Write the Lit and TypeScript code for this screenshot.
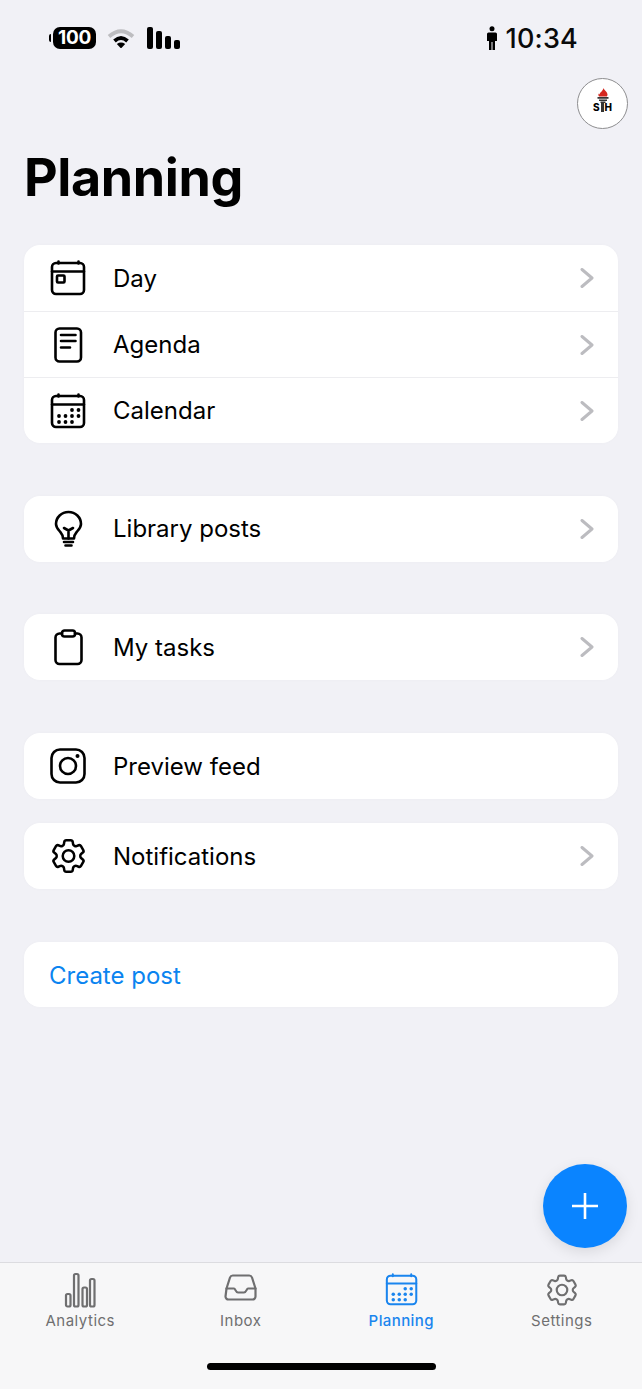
import { LitElement, css, html, svg } from "lit";
import { customElement } from "lit/decorators.js";
import { classMap } from "lit/directives/class-map.js";

const GEAR =
  "M9.594 3.94c.09-.542.56-.94 1.11-.94h2.593c.55 0 1.02.398 1.11.94l.213 1.281c.063.374.313.686.645.87.074.04.147.083.22.127.325.196.72.257 1.075.124l1.217-.456a1.125 1.125 0 0 1 1.37.49l1.296 2.247a1.125 1.125 0 0 1-.26 1.431l-1.003.827c-.293.241-.438.613-.43.992a7.723 7.723 0 0 1 0 .255c-.008.378.137.75.43.991l1.004.827c.424.35.534.955.26 1.43l-1.298 2.247a1.125 1.125 0 0 1-1.369.491l-1.217-.456c-.355-.133-.75-.072-1.076.124a6.47 6.47 0 0 1-.22.128c-.331.183-.581.495-.644.869l-.213 1.281c-.09.543-.56.94-1.11.94h-2.594c-.55 0-1.019-.398-1.11-.94l-.213-1.281c-.062-.374-.312-.686-.644-.87a6.52 6.52 0 0 1-.22-.127c-.325-.196-.72-.257-1.076-.124l-1.217.456a1.125 1.125 0 0 1-1.369-.49l-1.297-2.247a1.125 1.125 0 0 1 .26-1.431l1.004-.827c.292-.24.437-.613.43-.991a6.932 6.932 0 0 1 0-.255c.007-.38-.138-.751-.43-.992l-1.004-.827a1.125 1.125 0 0 1-.26-1.43l1.297-2.247a1.125 1.125 0 0 1 1.37-.491l1.216.456c.356.133.751.072 1.076-.124.072-.044.146-.086.22-.128.332-.183.582-.495.644-.869l.214-1.28Z";

function calendarFrame() {
  return svg`
    <rect x="2" y="3" width="32" height="31" rx="4"></rect>
    <path d="M2 11.5h32M8.5 1.5v2M28.5 1.5v2"></path>
  `;
}

function calendarDots() {
  const dots = [
    [22, 17], [28.5, 17],
    [9, 23], [15.5, 23], [22, 23], [28.5, 23],
    [9, 29], [15.5, 29], [22, 29],
  ];
  return dots.map(([x, y]) => svg`<circle class="dot" cx=${x} cy=${y} r="1.9"></circle>`);
}

const rowIcons = {
  day: svg`
    ${calendarFrame()}
    <rect x="7" y="15.5" width="7.5" height="7" rx="1"></rect>
  `,
  agenda: svg`
    <rect x="5.5" y="1.5" width="25.5" height="33" rx="4"></rect>
    <path d="M11 8h14.5M11 14h14.5M11 20.5h9"></path>
  `,
  calendar: svg`${calendarFrame()}${calendarDots()}`,
  bulb: svg`
    <path d="M13 27.500c0-4-1.500-5-3.500-7.500C7.500 17.800 6 16 6 13 6 6.200 11.500 1 18.500 1S31 6.200 31 13c0 3-1.500 4.800-3.500 7-2 2.500-3.500 3.500-3.500 7.500z"></path>
    <path d="M14 17l4.500 2.500 4.500-2.500M18.500 19.500v8M14 31h9M15.500 34.500h6"></path>
  `,
  clipboard: svg`
    <path d="M12 4.500H9.500a4 4 0 0 0-4 4V31a4 4 0 0 0 4 4h18a4 4 0 0 0 4-4V8.500a4 4 0 0 0-4-4H25"></path>
    <rect x="12" y="1.500" width="13" height="6" rx="2.500"></rect>
  `,
  instagram: svg`
    <rect x="1.500" y="1.500" width="33" height="33" rx="8.500"></rect>
    <circle cx="18" cy="18" r="8"></circle>
    <circle class="dot" cx="27.500" cy="8" r="2"></circle>
  `,
  gear: svg`
    <g transform="translate(-2.500 -3) scale(1.750)">
      <path stroke-width="1.450" d=${GEAR}></path>
      <circle stroke-width="1.450" cx="12" cy="12" r="3.300"></circle>
    </g>
  `,
};

const tabIcons = {
  analytics: svg`
    <rect x="2" y="21" width="4.500" height="12.500" rx="1.500"></rect>
    <rect x="10" y="1" width="4.500" height="32.500" rx="1.500"></rect>
    <rect x="18.500" y="14.500" width="4.500" height="19" rx="1.500"></rect>
    <rect x="26" y="6" width="4.500" height="27.500" rx="1.500"></rect>
  `,
  inbox: svg`
    <path d="M1.500 15.500 5 4.500a3 3 0 0 1 2.800-2h16.400a3 3 0 0 1 2.800 2l3.500 11v8a3 3 0 0 1-3 3h-24a3 3 0 0 1-3-3z"></path>
    <path d="M1.500 15.500h7.500c1.500 0 1.500 4 4 4h6c2.500 0 2.500-4 4-4h7.500"></path>
  `,
  planning: svg`
    <g transform="scale(0.92)">
      ${calendarFrame()}${calendarDots()}
    </g>
  `,
  settings: svg`
    <g transform="translate(-3.200 -2.200) scale(1.600)">
      <path stroke-width="1.350" d=${GEAR}></path>
      <circle stroke-width="1.350" cx="12" cy="12" r="3.300"></circle>
    </g>
  `,
};

type RowIcon = keyof typeof rowIcons;
type TabIcon = keyof typeof tabIcons;

interface Row {
  icon: RowIcon;
  label: string;
  chevron: boolean;
}

const groups: { near?: boolean; rows: Row[] }[] = [
  {
    rows: [
      { icon: "day", label: "Day", chevron: true },
      { icon: "agenda", label: "Agenda", chevron: true },
      { icon: "calendar", label: "Calendar", chevron: true },
    ],
  },
  { rows: [{ icon: "bulb", label: "Library posts", chevron: true }] },
  { rows: [{ icon: "clipboard", label: "My tasks", chevron: true }] },
  { rows: [{ icon: "instagram", label: "Preview feed", chevron: false }] },
  { near: true, rows: [{ icon: "gear", label: "Notifications", chevron: true }] },
];

const tabs: { icon: TabIcon; label: string; active?: boolean }[] = [
  { icon: "analytics", label: "Analytics" },
  { icon: "inbox", label: "Inbox" },
  { icon: "planning", label: "Planning", active: true },
  { icon: "settings", label: "Settings" },
];

@customElement("app-root")
export class AppRoot extends LitElement {
  private renderRow(row: Row) {
    return html`
      <div class="row">
        <svg class="row-icon" viewBox="0 0 36 36" aria-hidden="true">${rowIcons[row.icon]}</svg>
        <span class="row-label">${row.label}</span>
        ${row.chevron
          ? html`<svg class="chevron" viewBox="0 0 14 20" aria-hidden="true"><path d="M2 1.500 12 10 2 18.500"></path></svg>`
          : ""}
      </div>
    `;
  }

  protected override render() {
    return html`
      <div class="screen">
        <div class="status">
          <div class="status-left">
            <span class="nub"></span>
            <span class="battery">100</span>
            <svg class="wifi" viewBox="0 0 28 20" aria-hidden="true">
              <path class="wifi-far" d="M2 8.500Q14 -2 26 8.500"></path>
              <path d="M7.500 13Q14 7 20.500 13"></path>
              <path class="wifi-dot" d="M14 20.500 9.800 16q4.200-2.800 8.400 0z"></path>
            </svg>
            <span class="signal">
              <i style="height:22px"></i><i style="height:18px"></i><i style="height:13px"></i><i style="height:9px"></i>
            </span>
          </div>
          <div class="status-right">
            <svg class="person" viewBox="0 0 10 24" aria-hidden="true">
              <circle cx="5" cy="2.800" r="2.500"></circle>
              <path d="M1.500 6.500h7A1.500 1.500 0 0 1 10 8v7H8v9H5.500v-8h-1v8H2v-9H0V8a1.500 1.500 0 0 1 1.500-1.500z"></path>
            </svg>
            <span class="time">10:34</span>
          </div>
        </div>

        <div class="avatar-row">
          <div class="avatar">
            <svg class="torch" viewBox="0 0 14 15" aria-hidden="true">
              <path class="flame" d="M7.500 0c.5 2 3.800 3.500 4 6.500.1.800-.2 1.500-.7 2H3.200c-.8-.7-1-1.800-.6-3 .2.500.5.800.9 1C3.800 4.500 7 3 7.500 0z"></path>
              <path class="cup" d="M1.500 9h11v1.800h-11zM3 11.400h8V13H3zM4.500 13.500h5V15h-5z"></path>
            </svg>
            <span class="monogram">S<i></i>H</span>
          </div>
        </div>

        <h1>Planning</h1>

        <main>
          ${groups.map(
            (group) => html`
              <section class=${classMap({ card: true, near: !!group.near })}>
                ${group.rows.map((row) => this.renderRow(row))}
              </section>
            `,
          )}
          <section class="card create">Create post</section>
        </main>

        <div class="fab">
          <svg viewBox="0 0 28 28" aria-hidden="true"><path d="M14 1v26M1 14h26"></path></svg>
        </div>

        <nav>
          <div class="tabs">
            ${tabs.map(
              (tab) => html`
                <div class=${classMap({ tab: true, active: !!tab.active })}>
                  <svg viewBox="0 0 32 34" aria-hidden="true">${tabIcons[tab.icon]}</svg>
                  <span>${tab.label}</span>
                </div>
              `,
            )}
          </div>
          <div class="home"></div>
        </nav>
      </div>
    `;
  }

  public static override styles = css`
    :host {
      display: block;
      font-family: Inter, "Liberation Sans", sans-serif;
      color: #000;
    }

    .screen {
      position: relative;
      display: flex;
      flex-direction: column;
      height: 1389px;
      background: #f1f1f6;
      overflow: hidden;
    }

    .status {
      display: flex;
      justify-content: space-between;
      align-items: center;
      height: 38px;
      padding: 19px 64px 0 49px;
    }

    .status-left,
    .status-right {
      display: flex;
      align-items: center;
    }

    .nub {
      width: 2px;
      height: 8px;
      margin-right: 2px;
      border-radius: 2px 0 0 2px;
      background: #000;
    }

    .battery {
      width: 43px;
      height: 22px;
      border-radius: 7px;
      background: #000;
      color: #fff;
      font-size: 19px;
      font-weight: 700;
      line-height: 22px;
      text-align: center;
      letter-spacing: -0.3px;
    }

    .wifi {
      width: 28px;
      height: 20px;
      margin-left: 11px;
      fill: none;
      stroke: #000;
      stroke-width: 3.800;
    }

    .wifi-far {
      stroke: #bdbdc0;
    }

    .wifi-dot {
      fill: #000;
      stroke: none;
    }

    .signal {
      display: flex;
      align-items: flex-end;
      gap: 3px;
      height: 22px;
      margin-left: 12px;
    }

    .signal i {
      width: 6px;
      border-radius: 2px;
      background: #000;
    }

    .person {
      width: 10px;
      height: 24px;
      fill: #000;
    }

    .time {
      margin-left: 9px;
      padding-top: 1px;
      font-size: 27px;
      font-weight: 500;
      line-height: 34px;
      letter-spacing: 0.2px;
      color: #0a0a0a;
    }

    .avatar-row {
      display: flex;
      justify-content: flex-end;
      margin-top: 21px;
      padding-right: 14px;
    }

    .avatar {
      box-sizing: border-box;
      display: flex;
      flex-direction: column;
      align-items: center;
      width: 51px;
      height: 51px;
      padding-top: 9px;
      border: 1px solid #8e8e90;
      border-radius: 50%;
      background: #fff;
    }

    .torch {
      width: 14px;
      height: 15px;
    }

    .flame {
      fill: #d4271f;
    }

    .cup {
      fill: #333;
    }

    .monogram {
      display: flex;
      align-items: flex-end;
      height: 9px;
      font-size: 10px;
      font-weight: 800;
      line-height: 9px;
    }

    .monogram i {
      width: 3px;
      height: 9px;
      margin: 0 1px;
      background: #333;
    }

    h1 {
      margin: 18px 0 0 24px;
      font-size: 52px;
      font-weight: 700;
      line-height: 62px;
      letter-spacing: -0.4px;
    }

    main {
      display: flex;
      flex: 1;
      flex-direction: column;
      gap: 52.6px;
      padding: 36.3px 24px 0;
    }

    .card {
      border-radius: 16px;
      background: #fff;
      box-shadow: 0 0 4px rgba(0, 0, 0, 0.02);
    }

    .near {
      margin-top: -28.6px;
    }

    .row {
      box-sizing: border-box;
      display: flex;
      align-items: center;
      height: 66px;
      padding: 0 24px 0 26px;
    }

    .row + .row {
      border-top: 1px solid #ededf0;
    }

    .row-icon {
      flex: none;
      width: 36px;
      height: 36px;
      overflow: visible;
      fill: none;
      stroke: #000;
      stroke-width: 2.6;
      stroke-linecap: round;
      stroke-linejoin: round;
    }

    .dot {
      fill: currentColor;
      stroke: none;
    }

    .row-label {
      flex: 1;
      margin-left: 27px;
      padding-top: 1px;
      font-size: 24px;
      line-height: 32px;
    }

    .chevron {
      width: 14px;
      height: 20px;
      fill: none;
      stroke: #bcbcc0;
      stroke-width: 3;
      stroke-linecap: round;
      stroke-linejoin: round;
    }

    .create {
      height: 65px;
      padding-left: 25px;
      color: #0a84f0;
      font-size: 24px;
      line-height: 67px;
    }

    .fab {
      position: absolute;
      top: 1164px;
      left: 543px;
      display: flex;
      align-items: center;
      justify-content: center;
      width: 84px;
      height: 84px;
      border-radius: 50%;
      background: #0a84ff;
      box-shadow: 0 4px 14px rgba(0, 0, 0, 0.1);
    }

    .fab svg {
      width: 28px;
      height: 28px;
      fill: none;
      stroke: #fff;
      stroke-width: 2.6;
    }

    nav {
      box-sizing: border-box;
      height: 127px;
      border-top: 1px solid #dcdce0;
      background: #f7f7f8;
    }

    .tabs {
      display: grid;
      grid-template-columns: repeat(4, 1fr);
      padding-top: 10px;
    }

    .tab {
      display: flex;
      flex-direction: column;
      align-items: center;
      color: #6f6f70;
    }

    .tab svg {
      width: 32px;
      height: 34px;
      overflow: visible;
      fill: none;
      stroke: currentColor;
      stroke-width: 2.2;
      stroke-linecap: round;
      stroke-linejoin: round;
    }

    .tab span {
      margin-top: 4px;
      font-size: 15px;
      font-weight: 400;
      line-height: 20px;
      letter-spacing: 0.5px;
    }

    .active {
      color: #1a85ee;
    }

    .active span {
      font-weight: 500;
      letter-spacing: 0.4px;
    }

    .home {
      width: 229px;
      height: 7px;
      margin: 32px auto 0;
      border-radius: 4px;
      background: #000;
    }
  `;
}

declare global {
  interface HTMLElementTagNameMap {
    "app-root": AppRoot;
  }
}
